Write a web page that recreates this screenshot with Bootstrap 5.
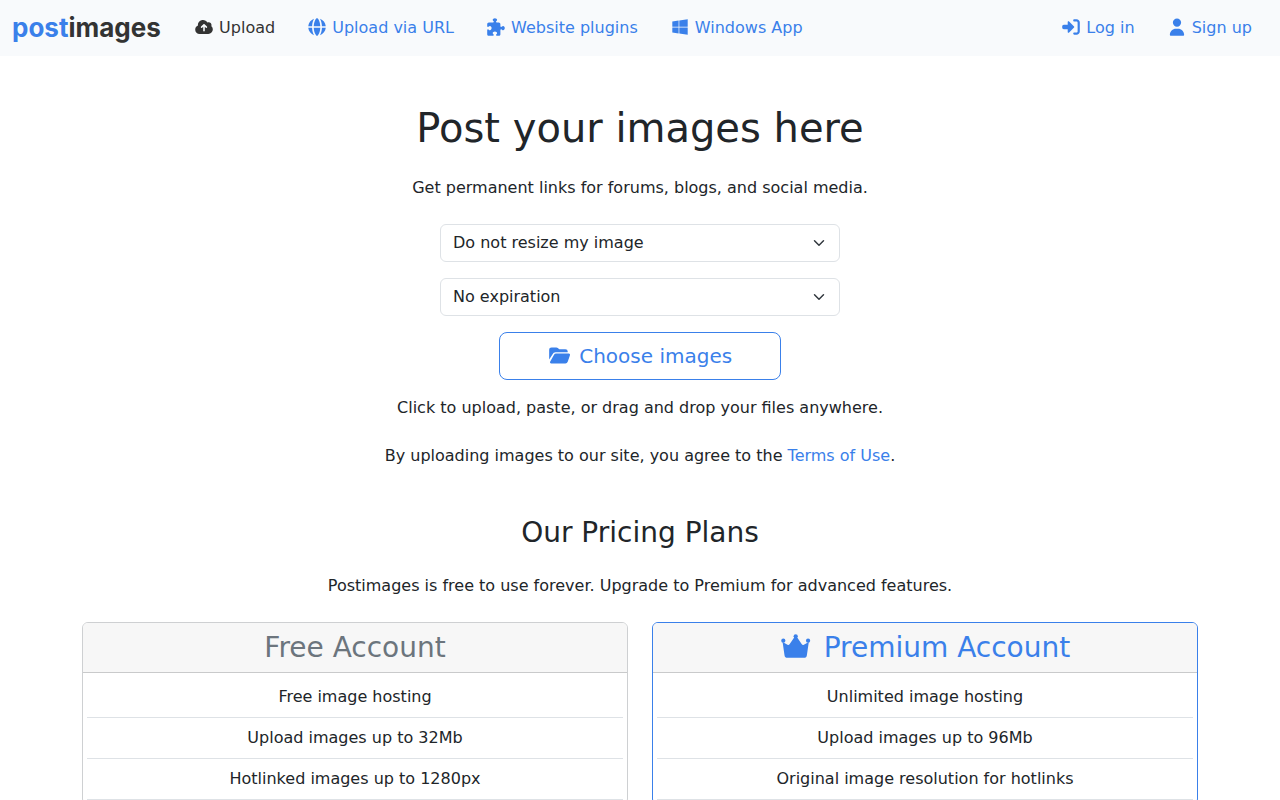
<!DOCTYPE html>
<html lang="en">
<head>
<meta charset="utf-8">
<meta name="viewport" content="width=device-width, initial-scale=1">
<title>Postimages</title>
<link href="https://cdn.jsdelivr.net/npm/bootstrap@5.3.0/dist/css/bootstrap.min.css" rel="stylesheet">
<style>
  :root { --brand: #3a80ea; }
  body { font-family: "DejaVu Sans", sans-serif; color: #212529; }
  a { color: var(--brand); text-decoration: none; }
  .topbar { background: #f8fafc; min-height: 56px; }
  .logo { font: 700 26px/40px Inter, sans-serif; color: #333; min-width: 150px; }
  .logo:hover { color: #333; }
  .logo span { color: var(--brand); }
  .topbar .navbar-nav .nav-link { color: var(--brand); padding: 8px 16px; }
  .topbar .navbar-nav .nav-link.active { color: #333; }
  .ico { width: 1.25em; height: 1.25em; fill: currentColor; vertical-align: baseline; margin: -0.25em 0; }
  .options { max-width: 400px; }
  .form-select { border-color: #dee2e6; }
  .btn-choose {
    --bs-btn-color: var(--brand); --bs-btn-border-color: var(--brand);
    --bs-btn-hover-color: #fff; --bs-btn-hover-bg: var(--brand); --bs-btn-hover-border-color: var(--brand);
  }
  .plan { border-color: #ced0d2; }
  .plan .card-header { background: #f7f7f7; border-bottom-color: #c9cacb; }
  .plan-free .card-header { color: #6c757d; }
  .plan-premium { border-color: var(--brand); }
  .plan-premium .card-header { color: var(--brand); }
</style>
</head>
<body>
<nav class="navbar navbar-expand-md topbar py-0">
  <div class="container-fluid">
    <a class="navbar-brand logo py-0 me-3" href="#"><span>post</span>images</a>
    <div class="navbar-nav me-auto">
      <a class="nav-link active" aria-current="page" href="#"><svg class="ico" viewBox="-35 -35 582 582" aria-hidden="true"><path fill-rule="evenodd" d="M128 461C57 461 0 404 0 333c0-54 33-100 80-119-1-5-1-10-1-15C79 117 145 51 227 51c56 0 104 30 129 76 11-6 23-9 36-9 46 0 83 37 83 83 0 12-2 23-7 33 27 21 44 54 44 91 0 75-58 136-130 136zM240 175l-70 70c-20 22 8 54 31 34l32-31v114c0 30 46 30 46 0V248l32 31c23 20 51-12 31-34l-70-70c-9-9-23-9-32 0z"/></svg> Upload</a>
      <a class="nav-link" href="#"><svg class="ico" viewBox="-35 -35 582 582" aria-hidden="true"><path d="M351.900 280l-190.900 0c2.900 64.500 17.200 123.900 37.500 167.400 11.400 24.500 23.700 41.800 35.100 52.400 11.200 10.500 18.900 12.200 22.900 12.200s11.700-1.700 22.900-12.200c11.400-10.600 23.700-28 35.100-52.400 20.300-43.500 34.600-102.900 37.500-167.400zM160.900 232l190.900 0C349 167.500 334.700 108.100 314.400 64.600 303 40.200 290.700 22.800 279.300 12.200 268.100 1.700 260.400 0 256.400 0s-11.700 1.700-22.900 12.200c-11.400 10.600-23.700 28-35.100 52.400-20.300 43.500-34.600 102.900-37.500 167.400zm-48 0C116.400 146.400 138.500 66.900 170.800 14.700 78.700 47.300 10.900 131.200 1.500 232l111.400 0zM1.500 280c9.400 100.800 77.200 184.700 169.300 217.300-32.300-52.200-54.400-131.700-57.900-217.300L1.500 280zm398.400 0c-3.500 85.600-25.600 165.100-57.900 217.300 92.100-32.700 159.900-116.500 169.300-217.300l-111.400 0zm111.400-48C501.900 131.200 434.100 47.300 342 14.700 374.300 66.900 396.400 146.400 399.900 232l111.400 0z"/></svg> Upload via URL</a>
      <a class="nav-link" href="#"><svg class="ico" viewBox="-35 -35 582 582" aria-hidden="true"><path d="M192 104.800c0-9.200-5.800-17.300-13.200-22.800C167.200 73.300 160 61.300 160 48c0-26.500 28.700-48 64-48s64 21.500 64 48c0 13.300-7.200 25.300-18.800 34c-7.400 5.500-13.200 13.600-13.200 22.800c0 12.800 10.400 23.200 23.200 23.200H336c26.500 0 48 21.500 48 48v56.800c0 12.800 10.400 23.200 23.200 23.200c9.200 0 17.300-5.800 22.800-13.200c8.700-11.600 20.700-18.800 34-18.800c26.500 0 48 28.700 48 64s-21.500 64-48 64c-13.300 0-25.300-7.200-34-18.800c-5.500-7.400-13.600-13.200-22.800-13.200c-12.800 0-23.200 10.400-23.200 23.200V464c0 26.500-21.500 48-48 48H279.200c-12.800 0-23.200-10.400-23.200-23.200c0-9.200 5.800-17.300 13.200-22.800c11.600-8.700 18.800-20.700 18.800-34c0-26.500-28.700-48-64-48s-64 21.500-64 48c0 13.300 7.200 25.300 18.800 34c7.400 5.500 13.200 13.600 13.200 22.800c0 12.800-10.400 23.200-23.200 23.200H48c-26.500 0-48-21.500-48-48V343.200C0 330.400 10.400 320 23.200 320c9.200 0 17.300 5.800 22.800 13.200C54.700 344.800 66.700 352 80 352c26.500 0 48-28.700 48-64s-21.500-64-48-64c-13.300 0-25.300 7.200-34 18.800C40.500 250.200 32.400 256 23.200 256C10.400 256 0 245.600 0 232.800V176c0-26.500 21.500-48 48-48H168.800c12.800 0 23.200-10.400 23.200-23.200z"/></svg> Website plugins</a>
      <a class="nav-link" href="#"><svg class="ico" viewBox="-67 -35 582 582" aria-hidden="true"><path d="M0 93.700l183.600-25.300v177.400H0V93.700zm0 324.600l183.600 25.300V268.400H0v149.900zm203.800 28L448 480V268.400H203.800v177.900zm0-380.600v180.100H448V32L203.800 65.700z"/></svg> Windows App</a>
    </div>
    <div class="navbar-nav">
      <a class="nav-link" href="#"><svg class="ico" viewBox="-35 -35 582 582" aria-hidden="true"><path d="M345 273c9.400-9.400 9.400-24.600 0-33.900L201 95c-6.900-6.900-17.200-8.900-26.200-5.200S160 102.300 160 112l0 80-112 0c-26.500 0-48 21.500-48 48l0 32c0 26.500 21.500 48 48 48l112 0 0 80c0 9.700 5.800 18.500 14.800 22.200s19.300 1.700 26.200-5.200L345 273zm7 143c-17.700 0-32 14.300-32 32s14.300 32 32 32l64 0c53 0 96-43 96-96l0-256c0-53-43-96-96-96l-64 0c-17.700 0-32 14.300-32 32s14.300 32 32 32l64 0c17.700 0 32 14.300 32 32l0 256c0 17.700-14.300 32-32 32l-64 0z"/></svg> Log in</a>
      <a class="nav-link" href="#"><svg class="ico" viewBox="-67 -35 582 582" aria-hidden="true"><path d="M224 248a120 120 0 1 0 0-240 120 120 0 1 0 0 240zm-29.700 56C95.800 304 16 383.800 16 482.300 16 498.700 29.300 512 45.700 512l356.600 0c16.400 0 29.700-13.300 29.700-29.700 0-98.500-79.800-178.300-178.300-178.300l-59.400 0z"/></svg> Sign up</a>
    </div>
  </div>
</nav>

<main class="container text-center pt-5">
  <h1 class="mb-4">Post your images here</h1>
  <p class="mb-4">Get permanent links for forums, blogs, and social media.</p>
  <form>
    <div class="options mx-auto">
      <select class="form-select mb-3" aria-label="Image size"><option>Do not resize my image</option></select>
      <select class="form-select mb-3" aria-label="Expiration"><option>No expiration</option></select>
    </div>
    <button type="button" class="btn btn-lg btn-choose px-5 mb-3"><svg class="ico" viewBox="-15 -35 582 582" aria-hidden="true"><path d="M12 350V130Q12 72 70 72H180Q200 72 215 84L240 104Q250 112 264 112H390Q444 112 444 165V180H160Q112 180 92 224Z"/><path d="M122 244Q138 212 174 212H470Q508 212 496 250L444 404Q430 444 390 444H60Q20 440 34 400Z"/></svg> Choose images</button>
  </form>
  <p class="mb-4">Click to upload, paste, or drag and drop your files anywhere.</p>
  <p class="mb-5">By uploading images to our site, you agree to the <a href="#">Terms of Use</a>.</p>

  <h2 class="h3 mb-4">Our Pricing Plans</h2>
  <p class="mb-4">Postimages is free to use forever. Upgrade to Premium for advanced features.</p>
  <div class="row row-cols-1 row-cols-md-2">
    <div class="col">
      <div class="card plan plan-free">
        <div class="card-header"><h3 class="mb-0">Free Account</h3></div>
        <div class="card-body p-1">
          <table class="table mb-0">
            <tbody>
              <tr><td>Free image hosting</td></tr>
              <tr><td>Upload images up to 32Mb</td></tr>
              <tr><td>Hotlinked images up to 1280px</td></tr>
            </tbody>
          </table>
        </div>
      </div>
    </div>
    <div class="col">
      <div class="card plan plan-premium">
        <div class="card-header"><h3 class="mb-0"><svg class="ico" viewBox="-5 -35 582 582" aria-hidden="true"><circle cx="50" cy="160" r="35"/><circle cx="256" cy="86" r="35"/><circle cx="462" cy="160" r="35"/><path d="M38 180L70 400Q76 444 120 444H392Q436 444 442 400L474 180L392 226Q372 238 358 218L276 100H236L154 218Q140 238 120 226Z"/></svg> Premium Account</h3></div>
        <div class="card-body p-1">
          <table class="table mb-0">
            <tbody>
              <tr><td>Unlimited image hosting</td></tr>
              <tr><td>Upload images up to 96Mb</td></tr>
              <tr><td>Original image resolution for hotlinks</td></tr>
            </tbody>
          </table>
        </div>
      </div>
    </div>
  </div>
</main>
<script src="https://cdn.jsdelivr.net/npm/bootstrap@5.3.0/dist/js/bootstrap.bundle.min.js"></script>
</body>
</html>
